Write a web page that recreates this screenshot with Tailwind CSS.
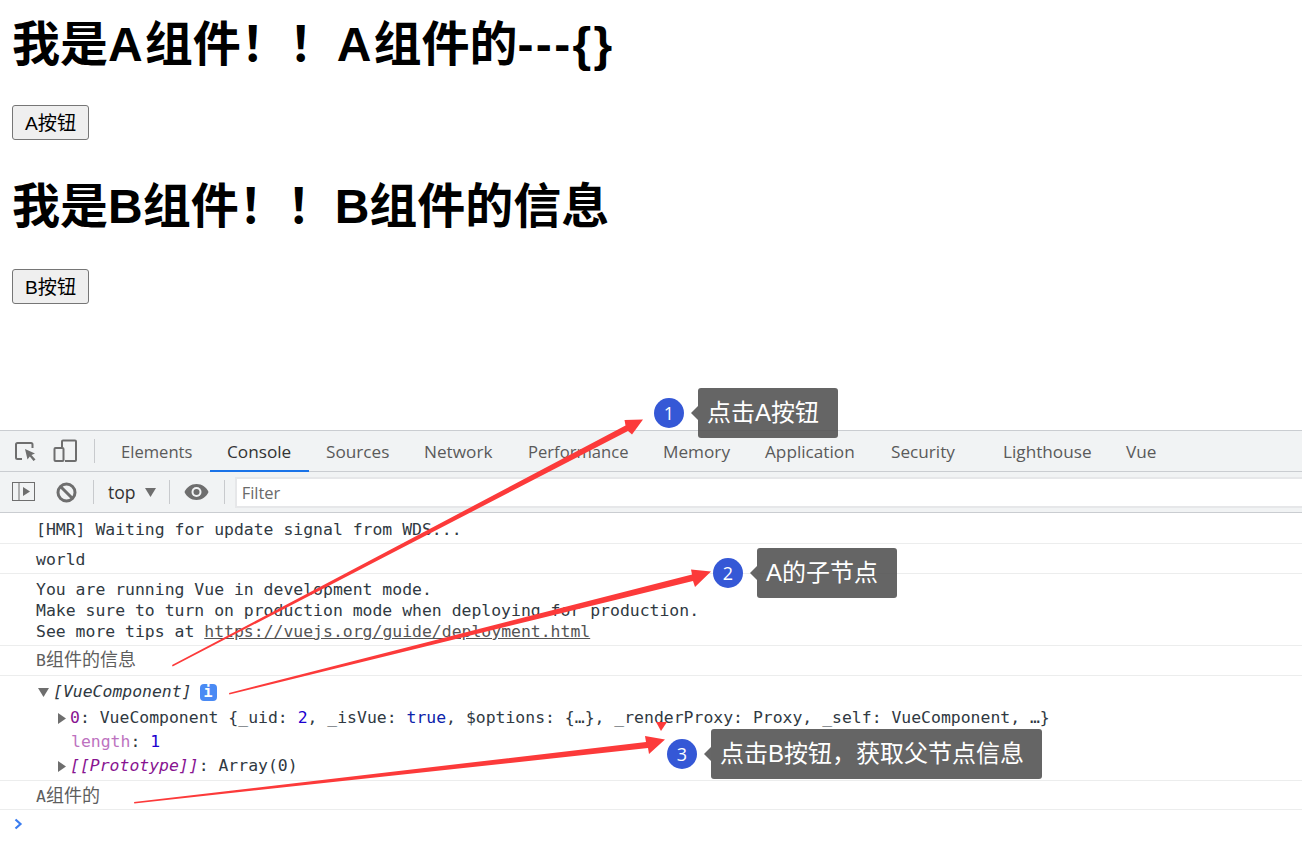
<!DOCTYPE html>
<html lang="zh-CN">
<head>
<meta charset="utf-8">
<title>组件</title>
<script src="https://cdn.jsdelivr.net/npm/@tailwindcss/browser@4"></script>
</head>
<body class="relative w-[1302px] h-[850px] overflow-hidden bg-white text-black font-['Liberation_Sans','Noto_Sans_CJK_SC',sans-serif]">

<main class="h-[430px] px-3">
  <h1 class="pt-[20px] h-[105px] text-[48px] leading-[50px] font-bold whitespace-pre">我是<span class="tracking-[2px]">A</span>组件！！<span class="tracking-[2px]">A</span>组件的<span class="tracking-[2.4px]">---{}</span></h1>
  <button class="block w-[77px] h-[35px] border border-[#767676] rounded-[3px] bg-[#efefef] text-[19.2px] leading-[36px] text-center">A按钮</button>
  <h1 class="pt-[20px] h-[129px] text-[48px] leading-[93px] font-bold whitespace-pre">我是B组件！！B组件的信息</h1>
  <button class="block w-[77px] h-[35px] border border-[#767676] rounded-[3px] bg-[#efefef] text-[19.2px] leading-[36px] text-center">B按钮</button>
</main>

<section class="border-t border-[#cacdd1] text-[#5a5a5a] font-['Open_Sans','Noto_Sans',sans-serif]">
  <div class="h-[41px] bg-[#f1f3f4] flex items-stretch text-[17.2px] border-b border-[#cacdd1]">
    <div class="w-[104px] flex items-center relative">
      <svg class="ml-[14px]" width="24" height="24" viewBox="0 0 24 24" fill="none"><path d="M8 20H3.500A1.500 1.500 0 0 1 2 18.500V5.500A1.500 1.500 0 0 1 3.500 4H17A1.500 1.500 0 0 1 18.500 5.500V9" stroke="#6e6e6e" stroke-width="2"/><path d="M11 10L21 14.500L17.500 16L21.500 20.500L19.500 22L15.800 17.500L13.500 20.500Z" fill="#6e6e6e"/></svg>
      <svg class="ml-[15px]" width="26" height="26" viewBox="0 0 26 26" fill="none"><path d="M9 9V3.500A1 1 0 0 1 10 2.500H22A1 1 0 0 1 23 3.500V22A1 1 0 0 1 22 23H12" stroke="#6e6e6e" stroke-width="2"/><rect x="1.500" y="10" width="9" height="13" rx="1" stroke="#6e6e6e" stroke-width="2"/></svg>
      <div class="absolute left-[94px] top-[8px] w-px h-[24px] bg-[#c8cacd]"></div>
    </div>
    <div class="w-[106px] pl-[17px] leading-[41px] text-[16.6px]">Elements</div>
    <div class="w-[99px] pl-[17px] leading-[41px] text-[#333] border-b-2 border-[#1a73e8] -mb-px">Console</div>
    <div class="w-[98px] pl-[17px] leading-[41px]">Sources</div>
    <div class="w-[104px] pl-[17px] leading-[41px]">Network</div>
    <div class="w-[135px] pl-[17px] leading-[41px] text-[16.6px]">Performance</div>
    <div class="w-[102px] pl-[17px] leading-[41px]">Memory</div>
    <div class="w-[126px] pl-[17px] leading-[41px]">Application</div>
    <div class="w-[112px] pl-[17px] leading-[41px]">Security</div>
    <div class="w-[123px] pl-[17px] leading-[41px]">Lighthouse</div>
    <div class="pl-[17px] leading-[41px]">Vue</div>
  </div>
  <div class="h-[41px] bg-[#f1f3f4] flex items-center border-b border-[#cacdd1] text-[17.6px]">
    <svg class="ml-[12px] shrink-0" width="23" height="20" viewBox="0 0 23 20" fill="none"><rect x="0.500" y="0.500" width="22" height="18" stroke="#6e6e6e"/><path d="M7 1V18" stroke="#6e6e6e"/><path d="M11 5L18 9.500L11 14Z" fill="#6e6e6e"/></svg>
    <svg class="ml-[21px] shrink-0" width="21" height="21" viewBox="0 0 21 21" fill="none"><circle cx="10.500" cy="10.500" r="8.500" stroke="#6e6e6e" stroke-width="3"/><path d="M4.500 4.500L16.500 16.500" stroke="#6e6e6e" stroke-width="3"/></svg>
    <div class="ml-[16px] w-px h-[24px] bg-[#c8cacd]"></div>
    <span class="ml-[14px] text-[#333]">top</span>
    <svg class="ml-[9px]" width="11" height="9" viewBox="0 0 11 9"><path d="M0 0H11L5.500 9Z" fill="#6e6e6e"/></svg>
    <div class="ml-[13px] w-px h-[24px] bg-[#c8cacd]"></div>
    <svg class="ml-[14px]" width="25" height="16" viewBox="0 0 25 16"><path d="M12.500 0C18 0 22.500 3.500 24.500 8C22.500 12.500 18 16 12.500 16C7 16 2.500 12.500 0.500 8C2.500 3.500 7 0 12.500 0Z" fill="#6e6e6e"/><circle cx="12.500" cy="8" r="5" fill="#f1f3f4"/><circle cx="12.500" cy="8" r="3" fill="#6e6e6e"/></svg>
    <div class="ml-[15px] w-px h-[24px] bg-[#c8cacd]"></div>
    <div class="ml-[10px] flex-1 h-[31px] bg-white border-y-2 border-l-2 border-[#e6e7e9] pl-[5px] leading-[27px] text-[16.5px] text-[#6a6a6a]">Filter</div>
  </div>
  <div class="font-['DejaVu_Sans_Mono','Noto_Sans_CJK_SC',monospace] text-[16.45px] text-[#303942]">
    <div class="h-[31px] pl-[36px] pt-[5px] leading-[24px] border-b border-[#eceded]">[HMR] Waiting for update signal from WDS...</div>
    <div class="h-[30px] pl-[36px] pt-[4px] leading-[24px] border-b border-[#eceded]">world</div>
    <div class="h-[72px] pl-[36px] pt-[5px] leading-[21px] border-b border-[#eceded]">
      <div>You are running Vue in development mode.</div>
      <div>Make sure to turn on production mode when deploying for production.</div>
      <div>See more tips at <span class="underline text-[#545454]">https://vuejs.org/guide/deployment.html</span></div>
    </div>
    <div class="h-[30px] pl-[36px] pt-[2px] leading-[24px] border-b border-[#eceded] text-[#5e5e5e]">B<span class="text-[18px]">组件的信息</span></div>
    <div class="h-[105px] border-b border-[#eceded]">
      <div class="h-[30px] pt-[3px] pl-[38px] flex items-center">
        <svg class="mr-[4px]" width="11" height="9" viewBox="0 0 11 9"><path d="M0 0H11L5.500 9Z" fill="#6e6e6e"/></svg>
        <span class="italic">[VueComponent]</span>
        <span class="ml-[8px] w-[17px] h-[17px] rounded-[4px] bg-[#4a8af4] text-white text-[15px] font-bold leading-[17px] text-center">i</span>
      </div>
      <div class="h-[24px] pl-[58px] flex items-center">
        <svg class="mr-[4px] shrink-0" width="8" height="11" viewBox="0 0 8 11"><path d="M0 0L8 5.500L0 11Z" fill="#6e6e6e"/></svg>
        <span class="whitespace-pre"><span class="text-[#881391]">0</span>: VueComponent {_uid: <span class="text-[#1c00cf]">2</span>, _isVue: <span class="text-[#0d22aa]">true</span>, $options: {…}, _renderProxy: Proxy, _self: VueComponent, …}</span>
      </div>
      <div class="h-[24px] pl-[71px] leading-[24px] whitespace-pre"><span class="text-[#bd72bf]">length</span>: <span class="text-[#1c00cf]">1</span></div>
      <div class="h-[24px] pl-[58px] flex items-center">
        <svg class="mr-[4px] shrink-0" width="8" height="11" viewBox="0 0 8 11"><path d="M0 0L8 5.500L0 11Z" fill="#6e6e6e"/></svg>
        <span class="whitespace-pre"><span class="italic text-[#881391]">[[Prototype]]</span>: Array(0)</span>
      </div>
    </div>
    <div class="h-[29px] pl-[36px] pt-[3px] leading-[24px] border-b border-[#eceded] text-[#5e5e5e]">A<span class="text-[18px]">组件的</span></div>
    <div class="pl-[14px] pt-[8px]">
      <svg width="9" height="12" viewBox="0 0 9 12" fill="none"><path d="M1.500 1.500L6.500 6L1.500 10.500" stroke="#3b7df0" stroke-width="2.200"/></svg>
    </div>
  </div>
</section>

<!-- 标注箭头 -->
<svg class="absolute left-0 top-0 pointer-events-none" width="1302" height="850" viewBox="0 0 1302 850">
  <path d="M172 665L172.600 666.500L628 431L632 434.500L643 419.500L624.500 420L625.500 425.500Z" fill="#fc3a3a"/>
  <path d="M229 693L229.300 694.500L693 581L695 587L711 571.500L691 569.500L692 574.500Z" fill="#fc3a3a"/>
  <path d="M134 802L134.300 803.500L648 748L649 754L665 739.500L645 736L646 742Z" fill="#fc3a3a"/>
  <path d="M656 722H667L661 731Z" fill="#fc3a3a"/>
</svg>

<!-- 标注气泡 -->
<div class="absolute left-[654px] top-[398px] w-[30px] h-[30px] rounded-full bg-[#3558d6] text-white text-[18px] leading-[30px] text-center font-['Open_Sans',sans-serif]">1</div>
<div class="absolute left-[691px] top-[406px] w-0 h-0 border-y-[7px] border-y-transparent border-r-[7px] border-r-[#666]"></div>
<div class="absolute left-[698px] top-[388px] w-[140px] h-[50px] rounded-[3px] bg-[#505050]/88 pl-[9px] text-[24px] leading-[50px] text-white font-['Liberation_Sans','Noto_Sans_CJK_SC',sans-serif]">点击A按钮</div>

<div class="absolute left-[713px] top-[558px] w-[30px] h-[30px] rounded-full bg-[#3558d6] text-white text-[18px] leading-[30px] text-center font-['Open_Sans',sans-serif]">2</div>
<div class="absolute left-[750px] top-[566px] w-0 h-0 border-y-[7px] border-y-transparent border-r-[7px] border-r-[#666]"></div>
<div class="absolute left-[757px] top-[548px] w-[140px] h-[50px] rounded-[3px] bg-[#505050]/88 pl-[9px] text-[24px] leading-[50px] text-white font-['Liberation_Sans','Noto_Sans_CJK_SC',sans-serif]">A的子节点</div>

<div class="absolute left-[667px] top-[739px] w-[30px] h-[30px] rounded-full bg-[#3558d6] text-white text-[18px] leading-[30px] text-center font-['Open_Sans',sans-serif]">3</div>
<div class="absolute left-[704px] top-[747px] w-0 h-0 border-y-[7px] border-y-transparent border-r-[7px] border-r-[#666]"></div>
<div class="absolute left-[711px] top-[729px] w-[331px] h-[50px] rounded-[3px] bg-[#505050]/88 pl-[9px] text-[24px] leading-[50px] text-white font-['Liberation_Sans','Noto_Sans_CJK_SC',sans-serif]">点击B按钮，获取父节点信息</div>

</body>
</html>
